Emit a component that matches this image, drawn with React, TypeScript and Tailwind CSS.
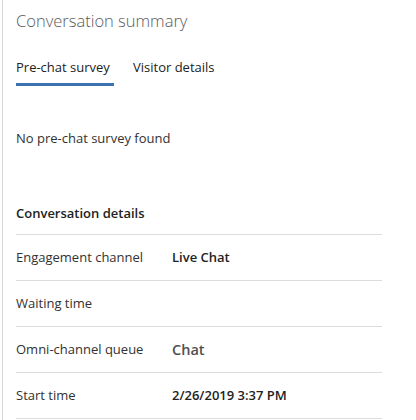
import React from 'react';

const rows = [
  { label: 'Engagement channel', value: 'Live Chat', kind: 'bold' },
  { label: 'Waiting time', value: '', kind: 'bold' },
  { label: 'Omni-channel queue', value: 'Chat', kind: 'link' },
  { label: 'Start time', value: '2/26/2019 3:37 PM', kind: 'bold' },
];

const App: React.FC = () => {
  return (
    <div
      className="w-[416px] h-[420px] bg-white overflow-hidden"
      style={{ fontFamily: '"Open Sans", "Noto Sans", sans-serif' }}
    >
      <div className="ml-[2px] h-full border-l border-[#d6d6d6] pl-[13px]">
        <div className="w-[366px]">
          {/* Header */}
          <h2 className="pt-[8px] text-[16.5px] leading-[25px] font-light text-[#5a5a5a]">
            Conversation summary
          </h2>

          {/* Tabs */}
          <div className="mt-[21px] flex items-start gap-[19px] text-[13px] text-[#222]">
            <div className="flex flex-col">
              <span className="leading-[26px]">Pre-chat survey</span>
              <span className="mt-[3px] h-[3px] w-[98px] bg-[#3b73b0]" />
            </div>
            <span className="leading-[26px]">Visitor details</span>
          </div>

          <p className="mt-[42px] text-[13px] leading-[20px] text-[#323130]">No pre-chat survey found</p>

          {/* Details */}
          <h3 className="mt-[55px] text-[13px] leading-[20px] font-semibold text-[#222]">
            Conversation details
          </h3>
          <div className="mt-[11px] border-t border-[#dcdcdc]">
            {rows.map((r) => (
              <div key={r.label} className="flex h-[46px] items-center border-b border-[#dcdcdc]">
                <span className="w-[156px] text-[13px] text-[#323130]">{r.label}</span>
                <span
                  className={
                    r.kind === 'link'
                      ? 'text-[14.5px] font-semibold text-[#505050]'
                      : 'text-[13px] font-semibold text-[#222]'
                  }
                >
                  {r.value}
                </span>
              </div>
            ))}
          </div>
        </div>
      </div>
    </div>
  );
};

export default App;
